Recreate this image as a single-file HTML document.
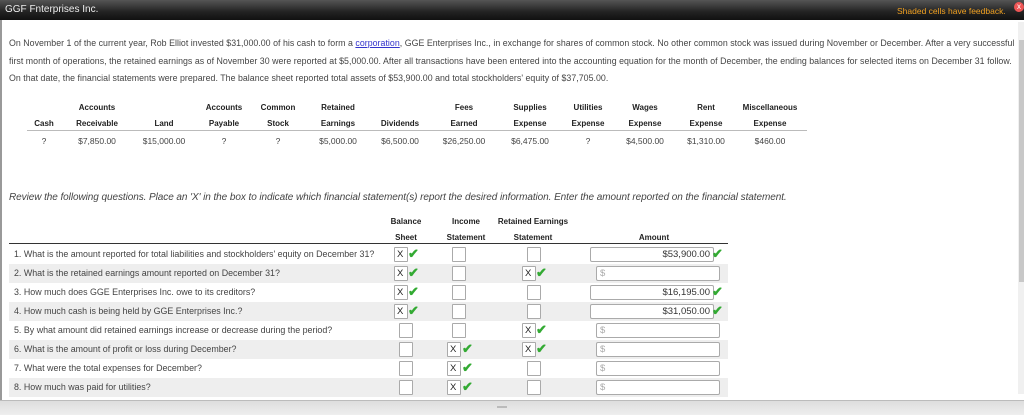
<!DOCTYPE html>
<html><head><meta charset="utf-8"><style>
body{margin:0;width:1024px;height:414px;overflow:hidden;background:#fff;font-family:"Liberation Sans",Arial,sans-serif;color:#333;position:relative}
.a{position:absolute;white-space:nowrap}
.hdr{left:0;top:0;width:1024px;height:20px;background:linear-gradient(#555,#222 60%,#111)}
.t{font-size:8.8px;letter-spacing:0.03px}
.h{font-size:8px;font-weight:bold;color:#222;text-align:center;transform:translateX(-50%)}
.v{font-size:8.5px;color:#444;transform:translateX(-50%)}
.row{left:9px;width:719px;height:19px}
.q{font-size:8.9px;color:#444;left:14px}
.box{width:14px;height:15px;border:1px solid #aaa;background:#fff;box-sizing:border-box;font-size:9.5px;color:#222;line-height:14px;padding-left:2px;border-radius:1px}
.ck{color:#3a3;font-size:13px;font-weight:bold;line-height:16px}
.inp{width:124px;height:15px;border:1px solid #aaa;background:#fff;box-sizing:border-box;font-size:9.5px;line-height:13px;padding:0 3px;border-radius:2px}
</style></head><body>
<div class="a hdr"></div>
<div class="a" style="left:5px;top:4px;font-size:10px;color:#eee">GGF Fnterprises Inc.</div>
<div class="a" style="left:897px;top:6px;font-size:8.5px;color:#f0a020">Shaded cells have feedback.</div>
<div class="a" style="left:1014px;top:2px;width:10px;height:10px;border-radius:5px;background:#e55;color:#fff;font-size:8px;text-align:center;line-height:10px">x</div>
<div class="a" style="left:0;top:20px;width:2px;height:380px;background:#999"></div>

<div class="a t" style="left:9px;top:38px;color:#444">On November 1 of the current year, Rob Elliot invested $31,000.00 of his cash to form a <span style="color:#33c;text-decoration:underline">corporation</span>, GGE Enterprises Inc., in exchange for shares of common stock. No other common stock was issued during November or December. After a very successful</div>
<div class="a t" style="left:9px;top:56px;color:#444">first month of operations, the retained earnings as of November 30 were reported at $5,000.00. After all transactions have been entered into the accounting equation for the month of December, the ending balances for selected items on December 31 follow.</div>
<div class="a t" style="left:9px;top:73px;color:#444">On that date, the financial statements were prepared. The balance sheet reported total assets of $53,900.00 and total stockholders' equity of $37,705.00.</div>

<div class="a" style="left:1018px;top:22px;width:6px;height:372px;background:#f0f0f0"></div>
<div class="a" style="left:1019px;top:40px;width:5px;height:242px;background:#c8c8c8"></div>
<div class="a" style="left:0;top:400px;width:1024px;height:14px;background:linear-gradient(#ddd,#eee);border-top:1px solid #bbb"></div>
<div class="a" style="left:497px;top:406px;width:10px;height:2px;background:#bbb"></div>

<div class="a" style="left:27px;top:130px;width:780px;height:1px;background:#bbb"></div>
<div class="a h" style="left:97px;top:103px">Accounts</div>
<div class="a h" style="left:224px;top:103px">Accounts</div>
<div class="a h" style="left:278px;top:103px">Common</div>
<div class="a h" style="left:338px;top:103px">Retained</div>
<div class="a h" style="left:464px;top:103px">Fees</div>
<div class="a h" style="left:530px;top:103px">Supplies</div>
<div class="a h" style="left:588px;top:103px">Utilities</div>
<div class="a h" style="left:645px;top:103px">Wages</div>
<div class="a h" style="left:706px;top:103px">Rent</div>
<div class="a h" style="left:770px;top:103px">Miscellaneous</div>
<div class="a h" style="left:44px;top:119px">Cash</div>
<div class="a h" style="left:97px;top:119px">Receivable</div>
<div class="a h" style="left:164px;top:119px">Land</div>
<div class="a h" style="left:224px;top:119px">Payable</div>
<div class="a h" style="left:278px;top:119px">Stock</div>
<div class="a h" style="left:338px;top:119px">Earnings</div>
<div class="a h" style="left:400px;top:119px">Dividends</div>
<div class="a h" style="left:464px;top:119px">Earned</div>
<div class="a h" style="left:530px;top:119px">Expense</div>
<div class="a h" style="left:588px;top:119px">Expense</div>
<div class="a h" style="left:645px;top:119px">Expense</div>
<div class="a h" style="left:706px;top:119px">Expense</div>
<div class="a h" style="left:770px;top:119px">Expense</div>
<div class="a v" style="left:44px;top:136px">?</div>
<div class="a v" style="left:97px;top:136px">$7,850.00</div>
<div class="a v" style="left:164px;top:136px">$15,000.00</div>
<div class="a v" style="left:224px;top:136px">?</div>
<div class="a v" style="left:278px;top:136px">?</div>
<div class="a v" style="left:338px;top:136px">$5,000.00</div>
<div class="a v" style="left:400px;top:136px">$6,500.00</div>
<div class="a v" style="left:464px;top:136px">$26,250.00</div>
<div class="a v" style="left:530px;top:136px">$6,475.00</div>
<div class="a v" style="left:588px;top:136px">?</div>
<div class="a v" style="left:645px;top:136px">$4,500.00</div>
<div class="a v" style="left:706px;top:136px">$1,310.00</div>
<div class="a v" style="left:770px;top:136px">$460.00</div>

<div class="a" style="left:9px;top:192px;font-size:10px;letter-spacing:-0.07px;font-style:italic;color:#444">Review the following questions. Place an 'X' in the box to indicate which financial statement(s) report the desired information. Enter the amount reported on the financial statement.</div>

<div class="a h" style="left:406px;top:217px">Balance</div>
<div class="a h" style="left:466px;top:217px">Income</div>
<div class="a h" style="left:533px;top:217px">Retained Earnings</div>
<div class="a h" style="left:406px;top:233px">Sheet</div>
<div class="a h" style="left:466px;top:233px">Statement</div>
<div class="a h" style="left:533px;top:233px">Statement</div>
<div class="a h" style="left:654px;top:233px">Amount</div>
<div class="a" style="left:9px;top:243px;width:719px;height:1px;background:#333"></div>

<div class="a row" style="top:245px"></div>
<div class="a row" style="top:264px;background:#eee"></div>
<div class="a row" style="top:283px"></div>
<div class="a row" style="top:302px;background:#eee"></div>
<div class="a row" style="top:321px"></div>
<div class="a row" style="top:340px;background:#eee"></div>
<div class="a row" style="top:359px"></div>
<div class="a row" style="top:378px;background:#eee"></div>

<div class="a q" style="top:249px">1. What is the amount reported for total liabilities and stockholders' equity on December 31?</div>
<div class="a q" style="top:268px">2. What is the retained earnings amount reported on December 31?</div>
<div class="a q" style="top:287px">3. How much does GGE Enterprises Inc. owe to its creditors?</div>
<div class="a q" style="top:306px">4. How much cash is being held by GGE Enterprises Inc.?</div>
<div class="a q" style="top:325px">5. By what amount did retained earnings increase or decrease during the period?</div>
<div class="a q" style="top:344px">6. What is the amount of profit or loss during December?</div>
<div class="a q" style="top:363px">7. What were the total expenses for December?</div>
<div class="a q" style="top:382px">8. How much was paid for utilities?</div>

<div class="a box" style="left:394px;top:247px">X</div><div class="a ck" style="left:408px;top:246px">✔</div>
<div class="a box" style="left:394px;top:266px">X</div><div class="a ck" style="left:408px;top:265px">✔</div>
<div class="a box" style="left:394px;top:285px">X</div><div class="a ck" style="left:408px;top:284px">✔</div>
<div class="a box" style="left:394px;top:304px">X</div><div class="a ck" style="left:408px;top:303px">✔</div>
<div class="a box" style="left:399px;top:323px"></div>
<div class="a box" style="left:399px;top:342px"></div>
<div class="a box" style="left:399px;top:361px"></div>
<div class="a box" style="left:399px;top:380px"></div>
<div class="a box" style="left:452px;top:247px"></div>
<div class="a box" style="left:452px;top:266px"></div>
<div class="a box" style="left:452px;top:285px"></div>
<div class="a box" style="left:452px;top:304px"></div>
<div class="a box" style="left:452px;top:323px"></div>
<div class="a box" style="left:447px;top:342px">X</div><div class="a ck" style="left:462px;top:341px">✔</div>
<div class="a box" style="left:447px;top:361px">X</div><div class="a ck" style="left:462px;top:360px">✔</div>
<div class="a box" style="left:447px;top:380px">X</div><div class="a ck" style="left:462px;top:379px">✔</div>
<div class="a box" style="left:527px;top:247px"></div>
<div class="a box" style="left:522px;top:266px">X</div><div class="a ck" style="left:536px;top:265px">✔</div>
<div class="a box" style="left:527px;top:285px"></div>
<div class="a box" style="left:527px;top:304px"></div>
<div class="a box" style="left:522px;top:323px">X</div><div class="a ck" style="left:536px;top:322px">✔</div>
<div class="a box" style="left:522px;top:342px">X</div><div class="a ck" style="left:536px;top:341px">✔</div>
<div class="a box" style="left:527px;top:361px"></div>
<div class="a box" style="left:527px;top:380px"></div>
<div class="a inp" style="left:590px;top:247px;text-align:right;color:#333">$53,900.00</div><div class="a ck" style="left:712px;top:246px">✔</div>
<div class="a inp" style="left:596px;top:266px;color:#aaa">$</div>
<div class="a inp" style="left:590px;top:285px;text-align:right;color:#333">$16,195.00</div><div class="a ck" style="left:712px;top:284px">✔</div>
<div class="a inp" style="left:590px;top:304px;text-align:right;color:#333">$31,050.00</div><div class="a ck" style="left:712px;top:303px">✔</div>
<div class="a inp" style="left:596px;top:323px;color:#aaa">$</div>
<div class="a inp" style="left:596px;top:342px;color:#aaa">$</div>
<div class="a inp" style="left:596px;top:361px;color:#aaa">$</div>
<div class="a inp" style="left:596px;top:380px;color:#aaa">$</div>
</body></html>
